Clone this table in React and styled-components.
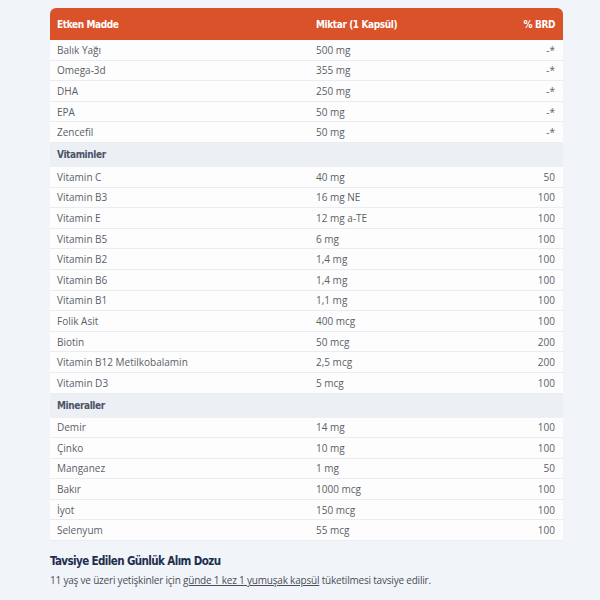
import styled, { createGlobalStyle } from "styled-components";

const GlobalStyle = createGlobalStyle`
  body {
    margin: 0;
    background: #f1f4f9;
    font-family: "Open Sans", "Noto Sans", sans-serif;
  }
`;

const rows = [
  { type: "row", name: "Balık Yağı", amount: "500 mg", brd: "-*" },
  { type: "row", name: "Omega-3d", amount: "355 mg", brd: "-*" },
  { type: "row", name: "DHA", amount: "250 mg", brd: "-*" },
  { type: "row", name: "EPA", amount: "50 mg", brd: "-*" },
  { type: "row", name: "Zencefil", amount: "50 mg", brd: "-*" },
  { type: "section", name: "Vitaminler" },
  { type: "row", name: "Vitamin C", amount: "40 mg", brd: "50" },
  { type: "row", name: "Vitamin B3", amount: "16 mg NE", brd: "100" },
  { type: "row", name: "Vitamin E", amount: "12 mg a-TE", brd: "100" },
  { type: "row", name: "Vitamin B5", amount: "6 mg", brd: "100" },
  { type: "row", name: "Vitamin B2", amount: "1,4 mg", brd: "100" },
  { type: "row", name: "Vitamin B6", amount: "1,4 mg", brd: "100" },
  { type: "row", name: "Vitamin B1", amount: "1,1 mg", brd: "100" },
  { type: "row", name: "Folik Asit", amount: "400 mcg", brd: "100" },
  { type: "row", name: "Biotin", amount: "50 mcg", brd: "200" },
  { type: "row", name: "Vitamin B12 Metilkobalamin", amount: "2,5 mcg", brd: "200" },
  { type: "row", name: "Vitamin D3", amount: "5 mcg", brd: "100" },
  { type: "section", name: "Mineraller" },
  { type: "row", name: "Demir", amount: "14 mg", brd: "100" },
  { type: "row", name: "Çinko", amount: "10 mg", brd: "100" },
  { type: "row", name: "Manganez", amount: "1 mg", brd: "50" },
  { type: "row", name: "Bakır", amount: "1000 mcg", brd: "100" },
  { type: "row", name: "İyot", amount: "150 mcg", brd: "100" },
  { type: "row", name: "Selenyum", amount: "55 mcg", brd: "100" },
];

export default function App() {
  return (
    <>
      <GlobalStyle />
      <Page>
        <Table>
          <Header>
            <span>Etken Madde</span>
            <span>Miktar (1 Kapsül)</span>
            <Right>% BRD</Right>
          </Header>
          {rows.map((r, i) =>
            r.type === "section" ? (
              <Section key={i}>{r.name}</Section>
            ) : (
              <Row key={i}>
                <span>{r.name}</span>
                <span>{r.amount}</span>
                <Right>{r.brd}</Right>
              </Row>
            )
          )}
        </Table>
        <Title>Tavsiye Edilen Günlük Alım Dozu</Title>
        <Note>
          11 yaş ve üzeri yetişkinler için <u>günde 1 kez 1 yumuşak kapsül</u>{" "}
          tüketilmesi tavsiye edilir.
        </Note>
      </Page>
    </>
  );
}

const Page = styled.div`
  width: 513px;
  margin-left: 50px;
  padding-top: 8px;
`;

const Table = styled.div`
  display: flex;
  flex-direction: column;
`;

const Grid = styled.div`
  display: grid;
  grid-template-columns: 259px 1fr 80px;
  align-items: center;
  padding: 0 8px 0 7px;
`;

const Header = styled(Grid)`
  height: 32px;
  background: #d9522a;
  border-radius: 6px 6px 0 0;
  color: #ffffff;
  font-family: "DejaVu Sans Condensed", "DejaVu Sans", sans-serif;
  font-weight: 700;
  font-size: 10px;
  letter-spacing: -0.4px;
`;

const Row = styled(Grid)`
  height: 20.6px;
  box-sizing: border-box;
  background: #fdfdfe;
  border-bottom: 1px solid #e9edf2;
  color: #5b5f66;
  font-size: 10px;
`;

const Section = styled.div`
  height: 24px;
  display: flex;
  align-items: center;
  padding-left: 7px;
  background: #eceff4;
  color: #4a5466;
  font-family: "DejaVu Sans Condensed", "DejaVu Sans", sans-serif;
  font-weight: 700;
  font-size: 10px;
  letter-spacing: -0.4px;
`;

const Right = styled.span`
  text-align: right;
`;

const Title = styled.div`
  margin-top: 13px;
  color: #1d2f4e;
  font-family: "DejaVu Sans Condensed", "DejaVu Sans", sans-serif;
  font-weight: 700;
  font-size: 11.5px;
  letter-spacing: -0.6px;
`;

const Note = styled.div`
  margin-top: 5px;
  color: #4a4f57;
  font-size: 10px;
  letter-spacing: -0.2px;
`;
